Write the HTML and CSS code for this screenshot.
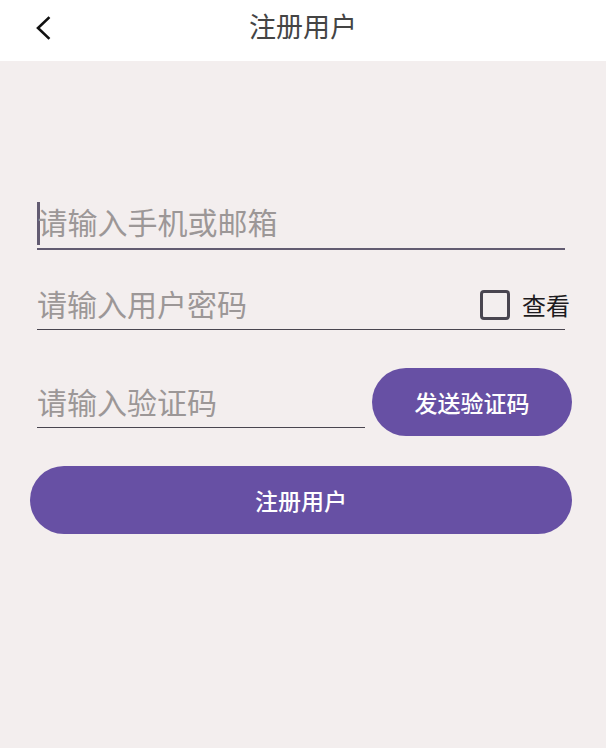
FILE: index.html
```html
<!DOCTYPE html>
<html lang="zh-CN">
<head>
<meta charset="utf-8">
<title>注册用户</title>
<link rel="stylesheet" href="styles.css">
</head>
<body>
<header class="topbar">
  <div class="back">
    <svg width="16" height="24" viewBox="0 0 16 24"><path d="M13.5 2 L3 12 L13.5 22" fill="none" stroke="#111" stroke-width="2.6" stroke-linecap="square"/></svg>
  </div>
  <div class="title">注册用户</div>
  <div class="spacer"></div>
</header>
<main class="form">
  <div class="field focused">
    <span class="caret"></span><span class="ph">请输入手机或邮箱</span>
  </div>
  <div class="field pwd">
    <span class="ph">请输入用户密码</span>
    <label class="show"><span class="box"></span><span class="show-text">查看</span></label>
  </div>
  <div class="code-row">
    <div class="field code"><span class="ph">请输入验证码</span></div>
    <button class="btn send">发送验证码</button>
  </div>
  <button class="btn register">注册用户</button>
</main>
</body>
</html>
```

FILE: styles.css
```css
html, body {
  margin: 0;
  padding: 0;
}
body {
  background: #f3eeee;
  font-family: "Noto Sans CJK SC", "Noto Sans", sans-serif;
  width: 606px;
  height: 748px;
}
.topbar {
  height: 61px;
  background: #ffffff;
  display: grid;
  grid-template-columns: 1fr auto 1fr;
  align-items: center;
  box-sizing: border-box;
  padding-bottom: 10px;
}
.back {
  padding-left: 35px;
  display: flex;
  align-items: center;
  padding-top: 5px;
}
.title {
  font-size: 27px;
  line-height: 34px;
  color: #444444;
}
.form {
  display: flex;
  flex-direction: column;
  padding: 137px 34px 0 30px;
}
.field {
  display: flex;
  align-items: center;
  margin: 0 7px;
  height: 49px;
  border-bottom: 1.5px solid #49454f;
}
.field.focused {
  height: 50px;
  border-bottom: 2.5px solid #625b71;
}
.caret {
  width: 2.5px;
  height: 43px;
  background: #625b71;
  margin-right: -2px;
}
.ph {
  font-size: 30px;
  line-height: 36px;
  color: #9c9797;
  position: relative;
  top: -2px;
}
.pwd {
  margin-top: 30px;
  justify-content: space-between;
}
.show {
  display: flex;
  align-items: center;
  margin-right: -5px;
}
.box {
  width: 24px;
  height: 24px;
  border: 3px solid #49454f;
  border-radius: 4px;
}
.show-text {
  margin-left: 12px;
  font-size: 24px;
  line-height: 30px;
  color: #1d1b20;
}
.code-row {
  display: flex;
  align-items: flex-start;
  margin: 38px 0 0 7px;
  gap: 7px;
}
.field.code {
  margin: 10px 0 0 0;
  width: 328px;
}
.btn {
  border: none;
  background: #6750a4;
  color: #ffffff;
  font-family: "Noto Sans CJK SC", "Noto Sans", sans-serif;
  font-size: 23px;
  font-weight: 500;
  height: 68px;
  border-radius: 34px;
  padding: 0;
}
.send {
  width: 200px;
}
.register {
  margin-top: 30px;
  width: 542px;
}
```
